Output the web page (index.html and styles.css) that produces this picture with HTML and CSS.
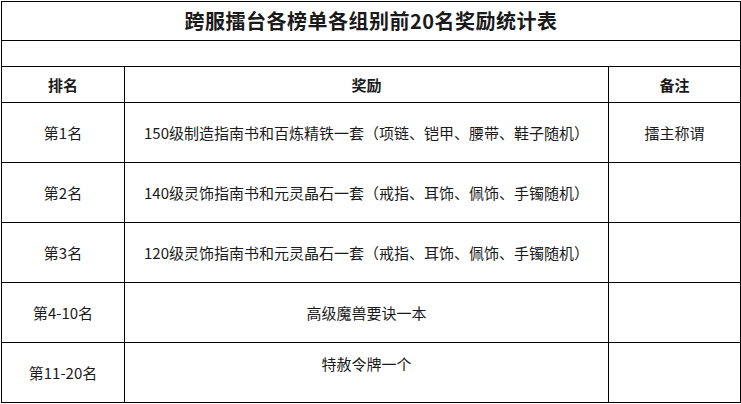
FILE: index.html
```html
<!DOCTYPE html>
<html lang="zh-CN">
<head>
<meta charset="utf-8">
<title>跨服擂台各榜单各组别前20名奖励统计表</title>
<link rel="stylesheet" href="styles.css">
</head>
<body>
<table class="sheet">
  <colgroup>
    <col class="c-rank">
    <col class="c-reward">
    <col class="c-note">
  </colgroup>
  <tr class="r-title"><td colspan="3" class="title">跨服擂台各榜单各组别前20名奖励统计表</td></tr>
  <tr class="r-empty"><td colspan="3"></td></tr>
  <tr class="r-head"><th>排名</th><th>奖励</th><th>备注</th></tr>
  <tr class="r-data"><td>第1名</td><td>150级制造指南书和百炼精铁一套（项链、铠甲、腰带、鞋子随机）</td><td>擂主称谓</td></tr>
  <tr class="r-data"><td>第2名</td><td>140级灵饰指南书和元灵晶石一套（戒指、耳饰、佩饰、手镯随机）</td><td></td></tr>
  <tr class="r-data"><td>第3名</td><td>120级灵饰指南书和元灵晶石一套（戒指、耳饰、佩饰、手镯随机）</td><td></td></tr>
  <tr class="r-data"><td>第4-10名</td><td>高级魔兽要诀一本</td><td></td></tr>
  <tr class="r-data"><td>第11-20名</td><td class="raised">特赦令牌一个</td><td></td></tr>
</table>
</body>
</html>
```
FILE: styles.css
```css
html, body {
  margin: 0;
  padding: 0;
  background: #ffffff;
}
body {
  font-family: "Noto Sans CJK SC", "Noto Sans", sans-serif;
  color: #1a1a1a;
  padding: 1px 0 0 1px;
}
.sheet {
  border-collapse: collapse;
  table-layout: fixed;
  width: 739px;
}
.c-rank { width: 123px; }
.c-reward { width: 484px; }
.c-note { width: 132px; }
.sheet td, .sheet th {
  border: 1px solid #000;
  padding: 0;
  text-align: center;
  vertical-align: middle;
  font-size: 15px;
  line-height: 20px;
  white-space: nowrap;
  overflow: hidden;
}
.sheet th {
  font-weight: bold;
}
.r-title td { height: 38px; }
.r-empty td { height: 25px; }
.r-head th { height: 35px; }
.r-data td { height: 59px; }
.sheet td.title {
  font-size: 20px;
  font-weight: bold;
  letter-spacing: 0.5px;
}
.sheet td.raised {
  height: 41px;
  padding-bottom: 18px;
}
```
